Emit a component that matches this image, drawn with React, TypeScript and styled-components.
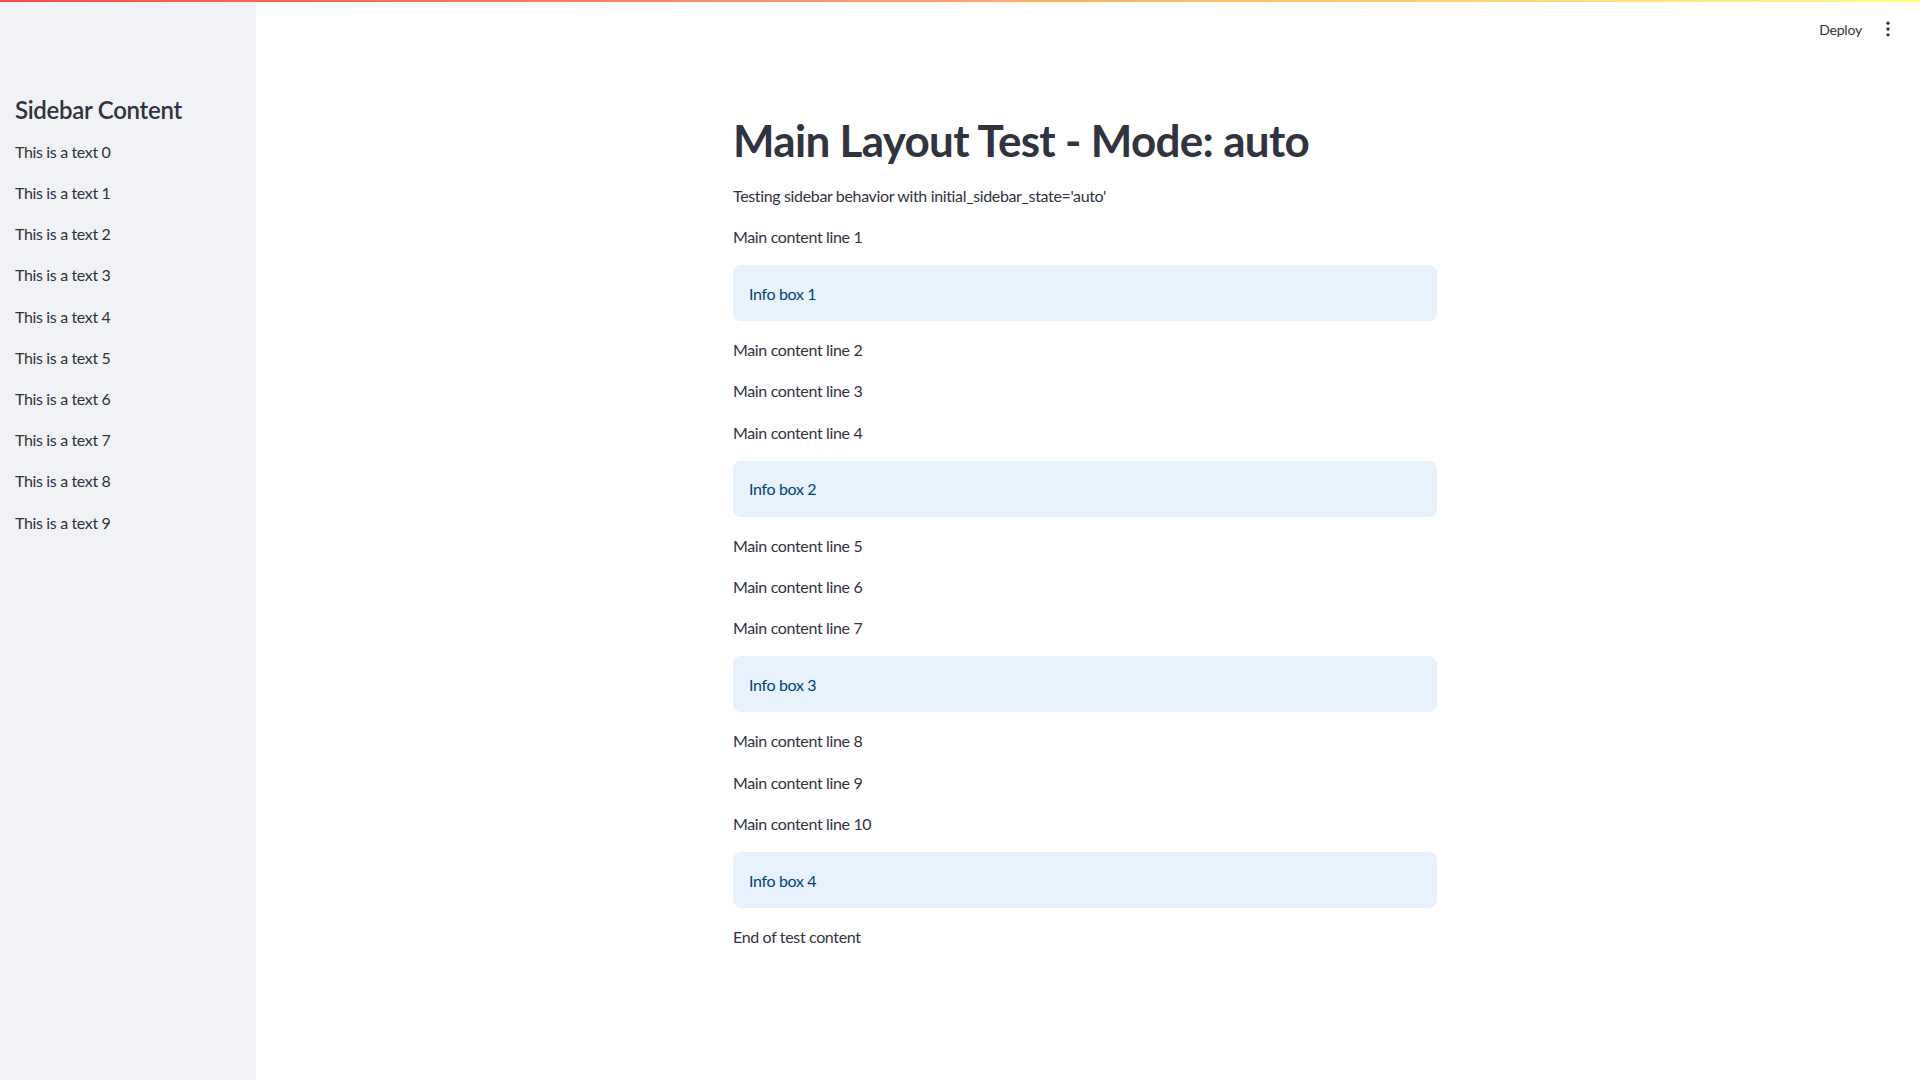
import styled, { createGlobalStyle } from "styled-components"

const GlobalStyle = createGlobalStyle`
  html, body {
    margin: 0;
    padding: 0;
    background: #ffffff;
  }
  body {
    font-family: Lato, "Noto Sans", "Liberation Sans", sans-serif;
    color: #31333f;
    -webkit-font-smoothing: antialiased;
  }
  * { box-sizing: border-box; }
`

const Page = styled.div`
  width: 100%;
  height: 1080px;
  display: flex;
  flex-direction: column;
  overflow: hidden;
`

const Decoration = styled.div`
  height: 2px;
  flex: none;
  background-image: linear-gradient(90deg, rgb(255, 75, 75), rgb(255, 253, 128));
`

const Body = styled.div`
  flex: 1;
  display: flex;
  min-height: 0;
`

const Sidebar = styled.aside`
  width: 256px;
  flex: none;
  background: #f0f2f6;
  padding: 94px 15px 0;
  display: flex;
  flex-direction: column;
  gap: 16px;
`

const SidebarTitle = styled.h2`
  margin: 0 0 -2px;
  font-size: 24px;
  font-weight: 600;
  line-height: 28.8px;
  letter-spacing: -0.3px;
  color: #31333f;
`

const Text = styled.p`
  margin: 0;
  font-size: 16px;
  line-height: 25.2px;
  letter-spacing: -0.35px;
  color: #31333f;
`

const Main = styled.main`
  flex: 1;
  display: flex;
  flex-direction: column;
`

const Toolbar = styled.header`
  height: 54px;
  display: flex;
  justify-content: flex-end;
  align-items: center;
  padding: 0 16px 0 0;
`

const DeployButton = styled.button`
  border: none;
  background: transparent;
  font-family: inherit;
  font-size: 14px;
  letter-spacing: -0.2px;
  color: #31333f;
  padding: 6px 10px;
  cursor: pointer;
`

const MenuButton = styled.button`
  border: none;
  background: transparent;
  width: 32px;
  height: 32px;
  padding: 0;
  display: flex;
  align-items: center;
  justify-content: center;
  color: #31333f;
  cursor: pointer;
`

const Content = styled.div`
  width: 704px;
  margin: 0 auto;
  padding: 38px 0 0;
  position: relative;
  left: -3px;
  display: flex;
  flex-direction: column;
  gap: 16px;
`

const Title = styled.h1`
  margin: 0;
  padding-top: 20px;
  font-size: 44px;
  font-weight: 700;
  line-height: 52.8px;
  letter-spacing: -0.7px;
  color: #31333f;
`

const InfoBox = styled.div`
  background: #e8f2fc;
  border-radius: 8px;
  padding: 15.5px 16px;
  font-size: 16px;
  line-height: 25px;
  letter-spacing: -0.35px;
  color: #004280;
`

const sidebarItems = Array.from({ length: 10 }, (_, i) => `This is a text ${i}`)

const blocks: { kind: "text" | "info"; label: string }[] = [
  { kind: "text", label: "Main content line 1" },
  { kind: "info", label: "Info box 1" },
  { kind: "text", label: "Main content line 2" },
  { kind: "text", label: "Main content line 3" },
  { kind: "text", label: "Main content line 4" },
  { kind: "info", label: "Info box 2" },
  { kind: "text", label: "Main content line 5" },
  { kind: "text", label: "Main content line 6" },
  { kind: "text", label: "Main content line 7" },
  { kind: "info", label: "Info box 3" },
  { kind: "text", label: "Main content line 8" },
  { kind: "text", label: "Main content line 9" },
  { kind: "text", label: "Main content line 10" },
  { kind: "info", label: "Info box 4" },
  { kind: "text", label: "End of test content" },
]

const KebabIcon = () => (
  <svg width="20" height="20" viewBox="0 0 24 24" fill="currentColor">
    <circle cx="12" cy="5" r="2" />
    <circle cx="12" cy="12" r="2" />
    <circle cx="12" cy="19" r="2" />
  </svg>
)

const App = () => {
  return (
    <>
      <GlobalStyle />
      <Page>
        <Decoration />
        <Body>
          <Sidebar>
            <SidebarTitle>Sidebar Content</SidebarTitle>
            {sidebarItems.map((t) => (
              <Text key={t}>{t}</Text>
            ))}
          </Sidebar>
          <Main>
            <Toolbar>
              <DeployButton>Deploy</DeployButton>
              <MenuButton>
                <KebabIcon />
              </MenuButton>
            </Toolbar>
            <Content>
              <Title>Main Layout Test - Mode: auto</Title>
              <Text>Testing sidebar behavior with initial_sidebar_state='auto'</Text>
              {blocks.map((b) =>
                b.kind === "info" ? (
                  <InfoBox key={b.label}>{b.label}</InfoBox>
                ) : (
                  <Text key={b.label}>{b.label}</Text>
                )
              )}
            </Content>
          </Main>
        </Body>
      </Page>
    </>
  )
}

export default App
